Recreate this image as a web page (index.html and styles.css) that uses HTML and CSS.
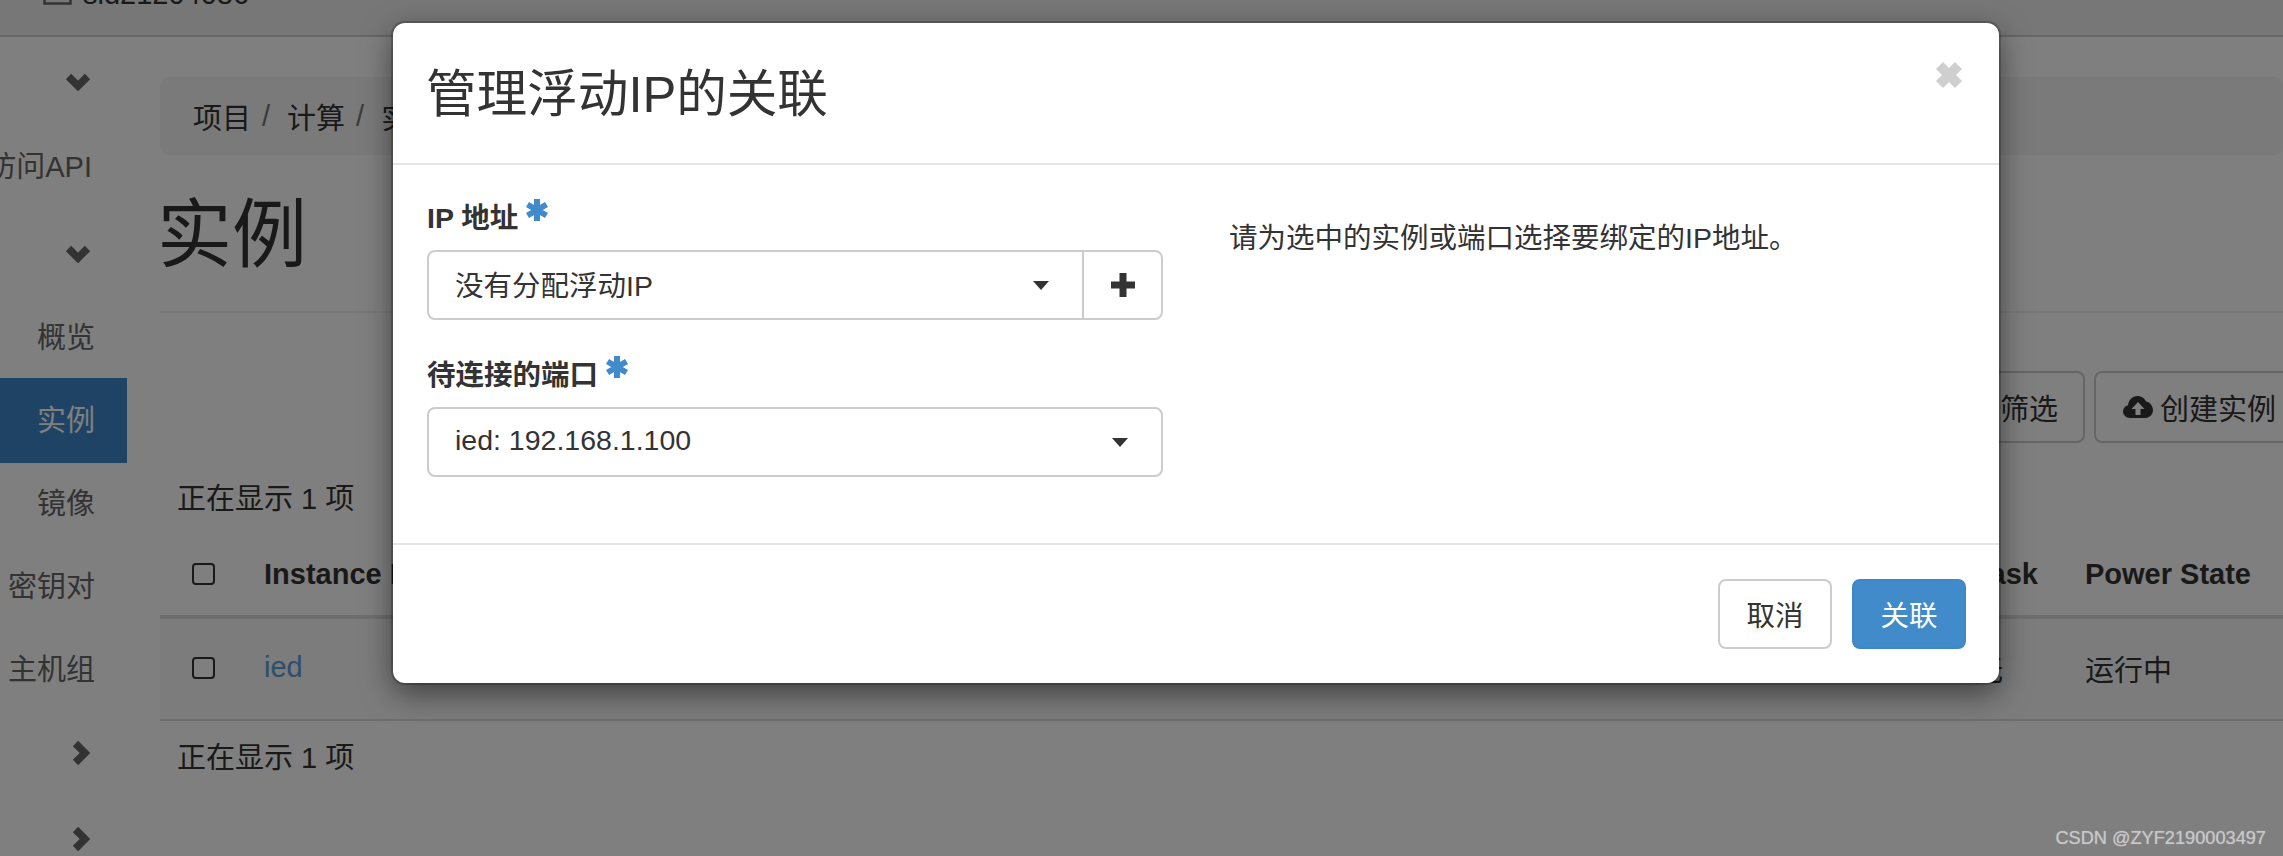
FILE: index.html
```html
<!DOCTYPE html>
<html lang="zh-CN">
<head>
<meta charset="utf-8">
<title>实例</title>
<link rel="stylesheet" href="styles.css">
</head>
<body>
<div class="page">
  <header class="topbar">
    <svg class="top-icon" viewBox="0 0 29 6" width="29" height="6"><path d="M1.500 0V3.500H27.500V0" fill="none" stroke="#666" stroke-width="2.500"/></svg>
    <span class="top-name">sld21204086</span>
  </header>
  <div class="layout">
    <nav class="sidebar">
      <div class="nav-toggle"><svg class="chev" viewBox="0 0 26 18" width="26" height="18"><path d="M3.500 3.500L13 13L22.500 3.500" /></svg></div>
      <div class="nav-group">访问API</div>
      <div class="nav-toggle second"><svg class="chev" viewBox="0 0 26 18" width="26" height="18"><path d="M3.500 3.500L13 13L22.500 3.500" /></svg></div>
      <a class="nav-link">概览</a>
      <a class="nav-link active">实例</a>
      <a class="nav-link">镜像</a>
      <a class="nav-link">密钥对</a>
      <a class="nav-link">主机组</a>
      <div class="nav-toggle right"><svg class="chev" viewBox="0 0 18 26" width="18" height="26"><path d="M3.500 3.500L13 13L3.500 22.500" /></svg></div>
      <div class="nav-toggle right"><svg class="chev" viewBox="0 0 18 26" width="18" height="26"><path d="M3.500 3.500L13 13L3.500 22.500" /></svg></div>
    </nav>
    <main class="main">
      <div class="breadcrumb">
        <span>项目</span><i>/</i><span>计算</span><i>/</i><span>实例</span>
      </div>
      <h1 class="page-title">实例</h1>
      <div class="toolbar">
        <button class="tool-btn filter">筛选</button>
        <button class="tool-btn">
          <svg viewBox="0 0 30 22" width="30" height="22"><path fill="#333" d="M7 22C3 22 0 19 0 15.500C0 12.500 2 10 5 9.300C5.500 4 9.500 0 14.500 0C18.500 0 21.500 2.300 23 5.500C27 6 30 10 30 14.300C30 18.500 26.500 22 22.500 22Z"/><path fill="#fff" d="M15 6L21.500 13H17.500V19H12.500V13H8.500Z"/></svg>
          创建实例
        </button>
      </div>
      <div class="count">正在显示 1 项</div>
      <table class="table">
        <colgroup><col class="col-check"><col class="col-name"><col class="col-task"><col></colgroup>
        <thead>
          <tr><th><input type="checkbox" class="check"></th><th>Instance Name</th><th>Task</th><th>Power State</th></tr>
        </thead>
        <tbody>
          <tr><td><input type="checkbox" class="check"></td><td><a class="link">ied</a></td><td>无</td><td>运行中</td></tr>
        </tbody>
      </table>
      <div class="count foot">正在显示 1 项</div>
    </main>
  </div>
</div>

<div class="backdrop"></div>

<section class="modal">
  <div class="modal-header">
    <h2 class="modal-title">管理浮动IP的关联</h2>
    <svg class="close" viewBox="0 0 30 30" width="30" height="30"><path d="M5.500 5.500L24.500 24.500M24.500 5.500L5.500 24.500"/></svg>
  </div>
  <div class="modal-body">
    <div class="form-col">
      <label class="field-label">IP 地址
        <svg class="req" viewBox="0 0 22 22" width="22" height="22"><path d="M11 0V22M1.500 5.500L20.500 16.500M20.500 5.500L1.500 16.500"/></svg>
      </label>
      <div class="input-group">
        <div class="select grow"><span>没有分配浮动IP</span><b class="caret"></b></div>
        <div class="add-btn"><svg class="plus" viewBox="0 0 24 24" width="24" height="24"><path d="M12 1V23M1 12H23"/></svg></div>
      </div>
      <label class="field-label next">待连接的端口
        <svg class="req" viewBox="0 0 22 22" width="22" height="22"><path d="M11 0V22M1.500 5.500L20.500 16.500M20.500 5.500L1.500 16.500"/></svg>
      </label>
      <div class="select"><span>ied: 192.168.1.100</span><b class="caret"></b></div>
    </div>
    <p class="help">请为选中的实例或端口选择要绑定的IP地址。</p>
  </div>
  <div class="modal-footer">
    <button class="btn">取消</button>
    <button class="btn primary">关联</button>
  </div>
</section>

<div class="watermark">CSDN @ZYF2190003497</div>
</body>
</html>
```

FILE: styles.css
```css
* { box-sizing: border-box; }
html, body { margin: 0; padding: 0; width: 2283px; height: 856px; overflow: hidden; background: #fff; }
body { font-family: "Liberation Sans", "Noto Sans CJK SC", sans-serif; font-size: 29px; color: #333; position: relative; }

.page { width: 2283px; height: 856px; overflow: hidden; }

.topbar { height: 37px; background: #eee; border-bottom: 2px solid #ccc; display: flex; align-items: flex-start; padding-left: 43px; overflow: hidden; }
.top-icon { flex: none; }
.top-name { margin: -22px 0 0 11px; line-height: 33px; color: #333; }

.layout { display: flex; height: 819px; }
.sidebar { width: 127px; flex: none; color: #666; padding-top: 3px; }
.nav-toggle { height: 84px; display: flex; align-items: center; justify-content: center; padding-left: 29px; }
.nav-toggle.second { height: 87px; padding-top: 5px; }
.nav-toggle.right { height: 86px; padding-left: 35px; }
.chev { fill: none; stroke: #666; stroke-width: 7.500; flex: none; }
.nav-group, .nav-link { display: flex; align-items: center; justify-content: flex-end; height: 83px; padding: 0 32px 3px 0; white-space: nowrap; }
.nav-group { height: 84px; padding: 0 35px 4px 0; }
.nav-link.active { background: #3f87c8; color: #fff; height: 85px; margin-bottom: -2px; padding-bottom: 5px; }

.main { flex: 1; min-width: 0; padding-left: 33px; }
.breadcrumb { margin-top: 40px; height: 78px; background: #f5f5f5; border-radius: 8px; padding-left: 33px; display: flex; align-items: center; white-space: nowrap; }
.breadcrumb i { font-style: normal; color: #777; margin: 0 17px 0 11px; }
.page-title { margin: 0; height: 158px; padding: 40px 0 0 0; border-bottom: 2px solid #eee; font-size: 75px; font-weight: 400; line-height: 80px; color: #333; text-indent: -3px; }

.toolbar { display: flex; justify-content: flex-end; gap: 9px; margin: 58px -22px 0 0; }
.tool-btn { height: 72px; font: inherit; color: #333; background: #fff; border: 2px solid #ccc; border-radius: 8px; padding: 0 27px; display: flex; align-items: center; gap: 7px; }
.tool-btn.filter { width: 200px; justify-content: flex-end; padding-right: 25px; }

.count { color: #333; height: 40px; line-height: 40px; margin: 36px 0 0 17px; }
.count.foot { margin-top: 17px; }

.table { border-collapse: collapse; table-layout: fixed; width: 2123px; margin-top: 14px; }
.col-check { width: 104px; }
.col-name { width: 1710px; }
.col-task { width: 111px; }
.table th { text-align: left; font-weight: 700; padding: 0; height: 84px; border-bottom: 4px solid #ddd; }
.table td { padding: 0 0 3px; height: 103px; background: #f9f9f9; border-bottom: 2px solid #ddd; }
.check { appearance: none; display: block; margin: 0 0 0 32px; width: 23px; height: 22px; border: 2px solid #333; border-radius: 4px; background: #fff; }
.link { color: #5a9cd8; }

.backdrop { position: absolute; inset: 0; background: rgba(0, 0, 0, 0.5); }

.modal { position: absolute; left: 393px; top: 23px; width: 1606px; height: 660px; background: #fff; border-radius: 12px; box-shadow: 0 0 0 2px rgba(0, 0, 0, 0.2), 0 10px 30px rgba(0, 0, 0, 0.5); display: flex; flex-direction: column; font-size: 28.500px; }
.modal-header { height: 142px; border-bottom: 2px solid #e5e5e5; padding: 0 35px 0 33px; display: flex; justify-content: space-between; align-items: flex-start; flex: none; }
.modal-title { margin: 42px 0 0; font-size: 50.600px; line-height: 60px; font-weight: 400; color: #333; }
.close { margin-top: 37px; fill: none; stroke: #cfcfcf; stroke-width: 10; flex: none; }

.modal-body { flex: 1; padding: 32px 0 0 34px; display: flex; }
.form-col { width: 736px; flex: none; }
.field-label { display: block; height: 42px; line-height: 42px; font-weight: 700; margin-bottom: 11px; color: #333; }
.field-label.next { margin-top: 34px; }
.req { fill: none; stroke: #428bca; stroke-width: 6; vertical-align: 7px; margin-left: 0; }
.input-group { display: flex; height: 70px; border: 2px solid #ccc; border-radius: 8px; }
.select { height: 70px; display: flex; align-items: center; justify-content: space-between; padding: 0 33px 4px 26px; border: 2px solid #ccc; border-radius: 8px; color: #333; background: #fff; }
.input-group .select { border: 0; height: 66px; flex: 1; background: transparent; padding-right: 33px; }
.caret { display: block; width: 0; height: 0; margin-top: 4px; border-left: 8px solid transparent; border-right: 8px solid transparent; border-top: 9px solid #333; }
.add-btn { width: 79px; flex: none; border-left: 2px solid #ccc; display: flex; align-items: center; justify-content: center; }
.plus { fill: none; stroke: #333; stroke-width: 7; stroke-linecap: round; }
.help { margin: 21px 0 0 66px; line-height: 40px; color: #333; }

.modal-footer { height: 140px; flex: none; border-top: 2px solid #e5e5e5; padding: 34px 33px 0 0; display: flex; justify-content: flex-end; align-items: flex-start; gap: 20px; }
.btn { width: 114px; height: 70px; padding: 0 0 2px; font: inherit; color: #333; background: #fff; border: 2px solid #ccc; border-radius: 8px; }
.btn.primary { background: #428bca; border-color: #3f87c6; color: #fff; }

.watermark { position: absolute; right: 17px; top: 827px; font-size: 18.200px; line-height: 22px; color: #c8c8c8; white-space: nowrap; text-shadow: 0 0 1px rgba(255, 255, 255, 0.4); }
```
